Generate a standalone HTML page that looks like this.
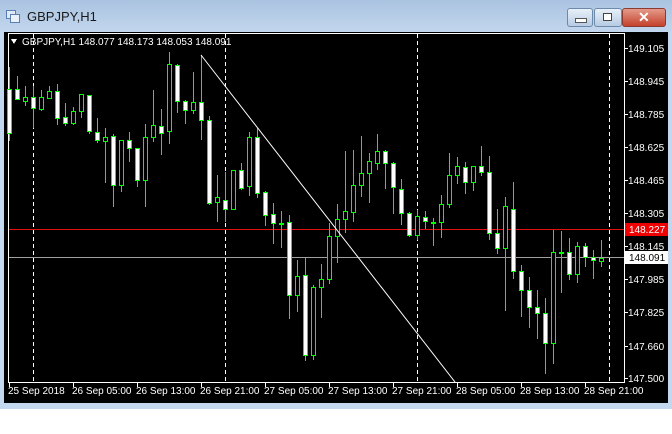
<!DOCTYPE html>
<html><head><meta charset="utf-8"><style>
body{margin:0;width:672px;height:434px;overflow:hidden;background:#fff;font-family:"Liberation Sans",sans-serif}
#title{position:absolute;left:0;top:0;width:672px;height:33px;background:linear-gradient(#aac3e0,#c3d7ee)}
#frame{position:absolute;left:0;top:28px;width:672px;height:381px;background:#c3d7ee}
.btn{position:absolute;top:8px;height:17px;border:1px solid #6d8aaa;border-radius:3px;background:linear-gradient(#e8f0f9,#b7cbe3)}
svg *{shape-rendering:crispEdges}
</style></head><body>
<div id="frame"></div>
<div id="title">
<svg style="position:absolute;left:6px;top:10px" width="14" height="14"><rect x="0.5" y="0.5" width="9" height="8" fill="#dfe9f5" stroke="#5a7fb0"/><rect x="4.5" y="4.5" width="9" height="8" fill="#eaf1f9" stroke="#5a7fb0"/></svg>
<div style="position:absolute;left:27px;top:9px;font-size:13px;color:#1a1a1a">GBPJPY,H1</div>
<div class="btn" style="left:567px;width:24px"><div style="position:absolute;left:7px;top:9px;width:10px;height:3px;background:#fff;border:1px solid #555"></div></div>
<div class="btn" style="left:594px;width:26px"><div style="position:absolute;left:8px;top:4px;width:7px;height:6px;border:1px solid #444;background:#fff"></div></div>
<div class="btn" style="left:622px;width:42px;border-color:#8a3a2e;background:linear-gradient(#e59a8a,#c4422c)"><div style="position:absolute;left:15px;top:0px;color:#fff;font-weight:bold;font-size:14px">✕</div></div>
</div>
<svg style="position:absolute;left:0;top:0" width="672" height="434" id="ch">
<rect x="4" y="32" width="664" height="371" fill="#000"/>
<rect x="8.5" y="33.5" width="616" height="349" fill="none" stroke="#fff"/>
<g stroke="#fff" stroke-dasharray="4,3">
<line x1="33.5" y1="34" x2="33.5" y2="382"/><line x1="225.5" y1="34" x2="225.5" y2="382"/><line x1="417.5" y1="34" x2="417.5" y2="382"/><line x1="609.5" y1="34" x2="609.5" y2="382"/></g>
<line x1="9" y1="229.5" x2="624" y2="229.5" stroke="#e01010"/>
<line x1="9" y1="257.5" x2="624" y2="257.5" stroke="#a0a0a0"/>
<g id="cs"></g>
<line x1="201" y1="55" x2="455" y2="382" stroke="#fff" style="shape-rendering:auto"/>
<g font-size="10" fill="#fff">
<polygon points="11,39 17,39 14,44" fill="#fff"/>
<text x="22" y="45">GBPJPY,H1  148.077 148.173 148.053 148.091</text>
</g>
<rect x="625" y="223" width="43" height="13" fill="#f00000"/>
<text x="629" y="233" font-size="10" fill="#fff">148.227</text>
<rect x="625" y="251" width="43" height="13" fill="#fff"/>
<text x="629" y="261" font-size="10" fill="#000">148.091</text>
</svg>
<script>
var d=[[67,89,133,140,'w'],[76,89,99,99,'w'],[86,97,101,105,'b'],[86,97,108,127,'w'],[90,97,109,110,'b'],[86,91,98,98,'b'],[84,91,118,124,'w'],[103,117,123,125,'w'],[107,111,123,124,'b'],[94,94,111,117,'b'],[95,95,131,133,'w'],[118,132,140,142,'w'],[128,137,141,182,'b'],[134,136,185,206,'w'],[140,140,185,191,'b'],[132,140,148,161,'w'],[148,148,180,186,'w'],[124,137,180,206,'b'],[90,125,137,141,'b'],[109,126,133,154,'w'],[52,64,131,143,'b'],[64,65,101,112,'w'],[100,101,110,123,'w'],[72,102,110,113,'b'],[55,102,120,139,'w'],[116,120,203,204,'w'],[175,197,202,221,'b'],[172,200,209,221,'w'],[170,170,209,209,'b'],[163,170,188,189,'w'],[132,137,186,195,'b'],[128,137,193,197,'w'],[191,192,215,225,'w'],[203,214,223,243,'w'],[211,223,225,247,'g'],[215,222,295,318,'w'],[260,276,295,311,'b'],[258,275,355,360,'w'],[285,287,355,359,'b'],[264,279,287,317,'b'],[223,236,279,283,'b'],[204,219,236,262,'b'],[151,211,219,232,'b'],[150,185,212,221,'b'],[136,173,185,196,'b'],[153,161,173,202,'b'],[134,151,163,169,'b'],[150,151,163,188,'w'],[162,163,187,213,'w'],[179,189,213,224,'w'],[212,213,235,236,'w'],[210,216,235,239,'b'],[211,217,221,228,'w'],[218,222,224,245,'g'],[195,204,222,237,'b'],[153,175,204,207,'b'],[157,166,175,183,'b'],[162,167,182,193,'w'],[166,166,182,190,'b'],[146,166,172,175,'w'],[156,172,233,239,'w'],[209,233,248,253,'w'],[197,206,248,310,'b'],[182,209,271,278,'w'],[265,271,290,316,'w'],[277,290,307,327,'w'],[290,307,313,338,'w'],[298,313,343,373,'w'],[230,252,343,363,'b'],[231,252,254,292,'g'],[238,252,274,279,'w'],[242,246,274,282,'b'],[243,246,257,266,'w'],[250,257,260,278,'w'],[240,258,261,266,'b']];
var s='';d.forEach(function(c,i){var x=9+8*i;s+='<rect x="'+x+'" y="'+c[0]+'" width="1" height="'+(c[3]-c[0]+1)+'" fill="#00ff00"/>';
if(c[4]=='g')s+='<rect x="'+(x-2)+'" y="'+c[1]+'" width="5" height="2" fill="#00ff00"/>';
else{var h=Math.max(2,c[2]-c[1]+1);s+='<rect x="'+(x-2)+'" y="'+c[1]+'" width="5" height="'+h+'" fill="#00ff00"/>';if(h>2)s+='<rect x="'+(x-1)+'" y="'+(c[1]+1)+'" width="3" height="'+(h-2)+'" fill="'+(c[4]=='w'?'#fff':'#000')+'"/>';}});
document.getElementById('cs').innerHTML=s;
</script>
<svg style="position:absolute;left:0;top:0" width="672" height="434">
<g font-size="10" fill="#fff" font-family="Liberation Sans">
<text x="628" y="52">149.105</text><text x="628" y="85">148.945</text><text x="628" y="118">148.785</text><text x="628" y="151">148.625</text><text x="628" y="184">148.465</text><text x="628" y="217">148.305</text><text x="628" y="250">148.145</text><text x="628" y="283">147.985</text><text x="628" y="316">147.825</text><text x="628" y="350">147.660</text><text x="628" y="382">147.500</text>
<text x="8" y="394">25 Sep 2018</text><text x="72" y="394">26 Sep 05:00</text><text x="136" y="394">26 Sep 13:00</text><text x="200" y="394">26 Sep 21:00</text><text x="264" y="394">27 Sep 05:00</text><text x="328" y="394">27 Sep 13:00</text><text x="392" y="394">27 Sep 21:00</text><text x="456" y="394">28 Sep 05:00</text><text x="520" y="394">28 Sep 13:00</text><text x="584" y="394">28 Sep 21:00</text>
</g>
<g stroke="#fff">
<line x1="9.5" y1="383" x2="9.5" y2="387"/><line x1="73.5" y1="383" x2="73.5" y2="387"/><line x1="137.5" y1="383" x2="137.5" y2="387"/><line x1="201.5" y1="383" x2="201.5" y2="387"/><line x1="265.5" y1="383" x2="265.5" y2="387"/><line x1="329.5" y1="383" x2="329.5" y2="387"/><line x1="393.5" y1="383" x2="393.5" y2="387"/><line x1="457.5" y1="383" x2="457.5" y2="387"/><line x1="521.5" y1="383" x2="521.5" y2="387"/><line x1="585.5" y1="383" x2="585.5" y2="387"/>
<line x1="625" y1="48.5" x2="628" y2="48.5"/><line x1="625" y1="81.5" x2="628" y2="81.5"/><line x1="625" y1="114.5" x2="628" y2="114.5"/><line x1="625" y1="147.5" x2="628" y2="147.5"/><line x1="625" y1="180.5" x2="628" y2="180.5"/><line x1="625" y1="213.5" x2="628" y2="213.5"/><line x1="625" y1="246.5" x2="628" y2="246.5"/><line x1="625" y1="279.5" x2="628" y2="279.5"/><line x1="625" y1="312.5" x2="628" y2="312.5"/><line x1="625" y1="346.5" x2="628" y2="346.5"/><line x1="625" y1="378.5" x2="628" y2="378.5"/>
</g>
</svg>
</body></html>
